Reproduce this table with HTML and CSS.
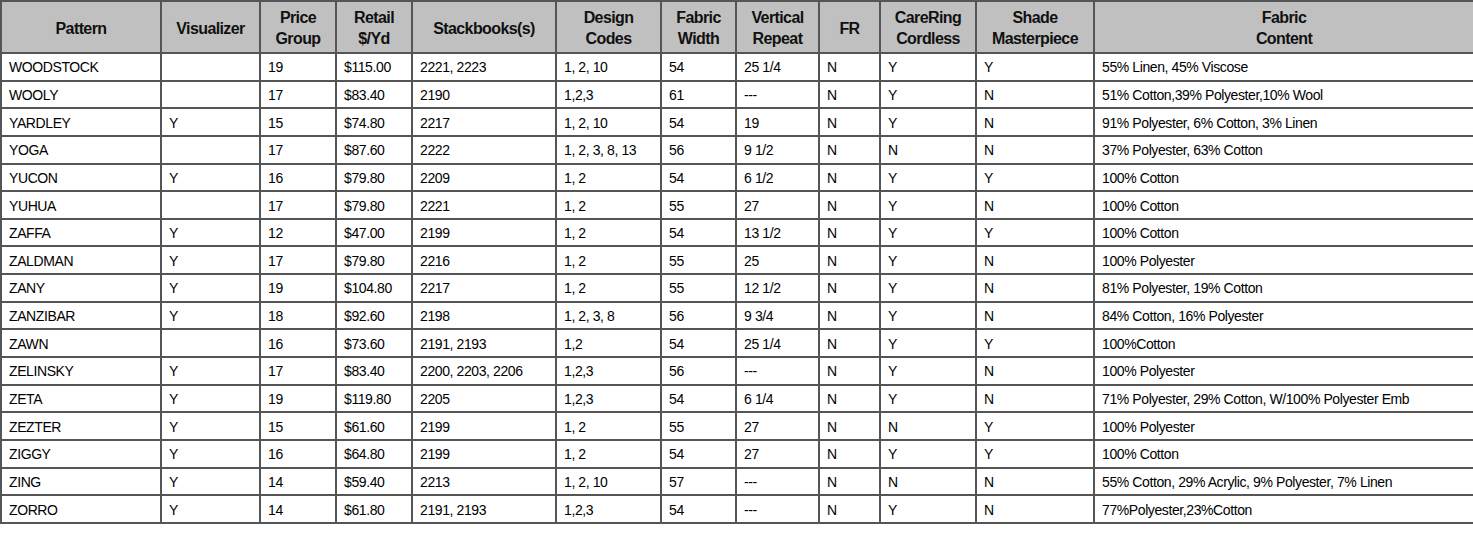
FILE: index.html
```html
<!DOCTYPE html>
<html>
<head>
<meta charset="utf-8">
<link rel="stylesheet" href="styles.css">
</head>
<body>
<table class="grid">
<colgroup>
<col class="c1"><col class="c2"><col class="c3"><col class="c4"><col class="c5"><col class="c6"><col class="c7"><col class="c8"><col class="c9"><col class="c10"><col class="c11"><col class="c12">
</colgroup>
<thead>
<tr><th>Pattern</th><th>Visualizer</th><th>Price<br>Group</th><th>Retail<br>$/Yd</th><th>Stackbooks(s)</th><th>Design<br>Codes</th><th>Fabric<br>Width</th><th>Vertical<br>Repeat</th><th>FR</th><th>CareRing<br>Cordless</th><th>Shade<br>Masterpiece</th><th>Fabric<br>Content</th></tr>
</thead>
<tbody>
<tr><td>WOODSTOCK</td><td></td><td>19</td><td>$115.00</td><td>2221, 2223</td><td>1, 2, 10</td><td>54</td><td>25 1/4</td><td>N</td><td>Y</td><td>Y</td><td>55% Linen, 45% Viscose</td></tr>
<tr><td>WOOLY</td><td></td><td>17</td><td>$83.40</td><td>2190</td><td>1,2,3</td><td>61</td><td>---</td><td>N</td><td>Y</td><td>N</td><td>51% Cotton,39% Polyester,10% Wool</td></tr>
<tr><td>YARDLEY</td><td>Y</td><td>15</td><td>$74.80</td><td>2217</td><td>1, 2, 10</td><td>54</td><td>19</td><td>N</td><td>Y</td><td>N</td><td>91% Polyester, 6% Cotton, 3% Linen</td></tr>
<tr><td>YOGA</td><td></td><td>17</td><td>$87.60</td><td>2222</td><td>1, 2, 3, 8, 13</td><td>56</td><td>9 1/2</td><td>N</td><td>N</td><td>N</td><td>37% Polyester, 63% Cotton</td></tr>
<tr><td>YUCON</td><td>Y</td><td>16</td><td>$79.80</td><td>2209</td><td>1, 2</td><td>54</td><td>6 1/2</td><td>N</td><td>Y</td><td>Y</td><td>100% Cotton</td></tr>
<tr><td>YUHUA</td><td></td><td>17</td><td>$79.80</td><td>2221</td><td>1, 2</td><td>55</td><td>27</td><td>N</td><td>Y</td><td>N</td><td>100% Cotton</td></tr>
<tr><td>ZAFFA</td><td>Y</td><td>12</td><td>$47.00</td><td>2199</td><td>1, 2</td><td>54</td><td>13 1/2</td><td>N</td><td>Y</td><td>Y</td><td>100% Cotton</td></tr>
<tr><td>ZALDMAN</td><td>Y</td><td>17</td><td>$79.80</td><td>2216</td><td>1, 2</td><td>55</td><td>25</td><td>N</td><td>Y</td><td>N</td><td>100% Polyester</td></tr>
<tr><td>ZANY</td><td>Y</td><td>19</td><td>$104.80</td><td>2217</td><td>1, 2</td><td>55</td><td>12 1/2</td><td>N</td><td>Y</td><td>N</td><td>81% Polyester, 19% Cotton</td></tr>
<tr><td>ZANZIBAR</td><td>Y</td><td>18</td><td>$92.60</td><td>2198</td><td>1, 2, 3, 8</td><td>56</td><td>9 3/4</td><td>N</td><td>Y</td><td>N</td><td>84% Cotton, 16% Polyester</td></tr>
<tr><td>ZAWN</td><td></td><td>16</td><td>$73.60</td><td>2191, 2193</td><td>1,2</td><td>54</td><td>25 1/4</td><td>N</td><td>Y</td><td>Y</td><td>100%Cotton</td></tr>
<tr><td>ZELINSKY</td><td>Y</td><td>17</td><td>$83.40</td><td>2200, 2203, 2206</td><td>1,2,3</td><td>56</td><td>---</td><td>N</td><td>Y</td><td>N</td><td>100% Polyester</td></tr>
<tr><td>ZETA</td><td>Y</td><td>19</td><td>$119.80</td><td>2205</td><td>1,2,3</td><td>54</td><td>6 1/4</td><td>N</td><td>Y</td><td>N</td><td>71% Polyester, 29% Cotton, W/100% Polyester Emb</td></tr>
<tr><td>ZEZTER</td><td>Y</td><td>15</td><td>$61.60</td><td>2199</td><td>1, 2</td><td>55</td><td>27</td><td>N</td><td>N</td><td>Y</td><td>100% Polyester</td></tr>
<tr><td>ZIGGY</td><td>Y</td><td>16</td><td>$64.80</td><td>2199</td><td>1, 2</td><td>54</td><td>27</td><td>N</td><td>Y</td><td>Y</td><td>100% Cotton</td></tr>
<tr><td>ZING</td><td>Y</td><td>14</td><td>$59.40</td><td>2213</td><td>1, 2, 10</td><td>57</td><td>---</td><td>N</td><td>N</td><td>N</td><td>55% Cotton, 29% Acrylic, 9% Polyester, 7% Linen</td></tr>
<tr><td>ZORRO</td><td>Y</td><td>14</td><td>$61.80</td><td>2191, 2193</td><td>1,2,3</td><td>54</td><td>---</td><td>N</td><td>Y</td><td>N</td><td>77%Polyester,23%Cotton</td></tr>
</tbody>
</table>
</body>
</html>
```
FILE: styles.css
```css
html, body {
  margin: 0;
  padding: 0;
  background: #ffffff;
}
.grid {
  border-collapse: collapse;
  table-layout: fixed;
  width: 1473px;
  font-family: "Liberation Sans", Arial, sans-serif;
  font-size: 14px;
  line-height: 16px;
  letter-spacing: -0.4px;
  color: #000;
}
.grid th, .grid td {
  border: 2px solid #555;
  padding: 0 0 0 7px;
  text-align: left;
  vertical-align: middle;
  overflow: hidden;
  white-space: nowrap;
}
.grid th {
  background: #c0c0c0;
  font-weight: bold;
  font-size: 16px;
  letter-spacing: -0.6px;
  line-height: 21px;
  text-align: center;
  padding: 2px 0 0 0;
  height: 48px;
  color: #111;
}
.grid td {
  height: 24.65px;
  padding-top: 1px;
}
.grid th:last-child, .grid td:last-child {
  border-right-color: #000;
}
.c1 { width: 160px; }
.c2 { width: 99px; }
.c3 { width: 76px; }
.c4 { width: 76px; }
.c5 { width: 144px; }
.c6 { width: 105px; }
.c7 { width: 75px; }
.c8 { width: 83px; }
.c9 { width: 61px; }
.c10 { width: 96px; }
.c11 { width: 118px; }
.c12 { width: 380px; }
```
